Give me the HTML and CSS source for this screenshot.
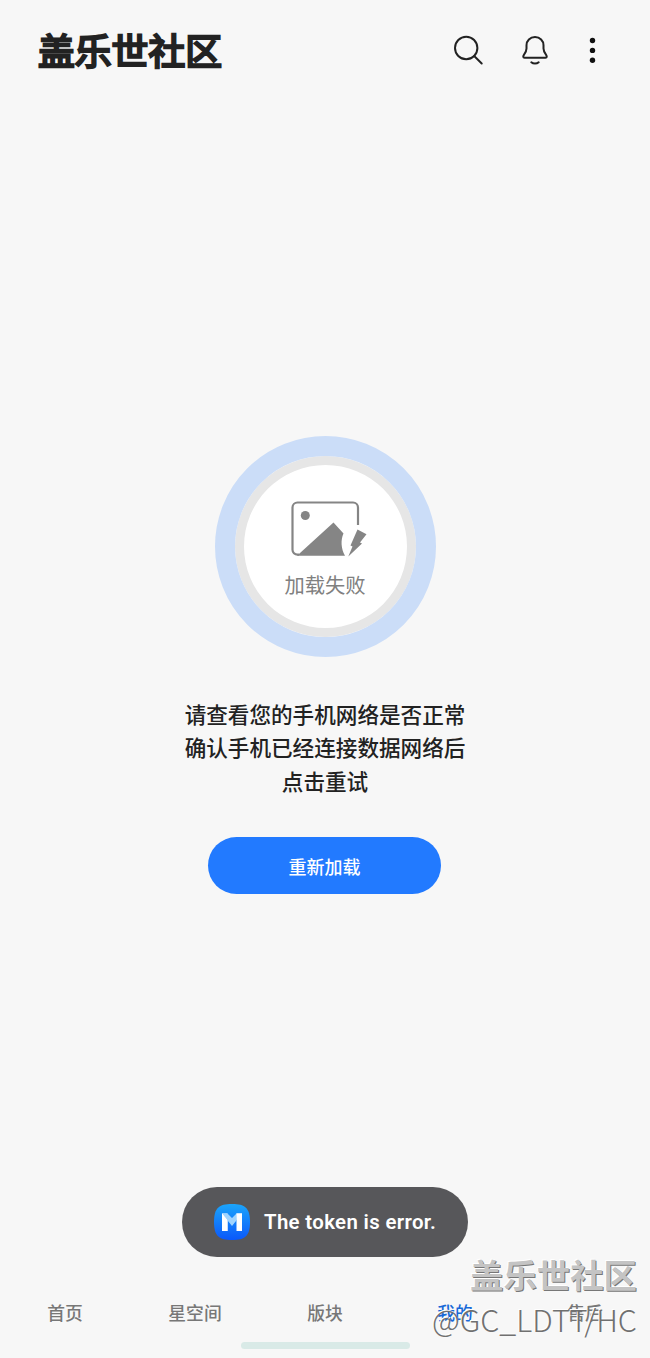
FILE: index.html
```html
<!DOCTYPE html>
<html lang="zh-CN">
<head>
<meta charset="UTF-8">
<meta name="viewport" content="width=device-width, initial-scale=1.0">
<title>盖乐世社区</title>
<link rel="stylesheet" href="styles.css">
</head>
<body>
<div class="page">
  <header class="header-bar">
    <h1 class="logo">盖乐世社区</h1>
    <div class="header-icons">
      <svg class="icon-search" width="32" height="32" viewBox="0 0 32 32">
        <circle cx="14.200" cy="14" r="11.200"/>
        <path d="M22.200 22l7.500 7.500"/>
      </svg>
      <svg class="icon-bell" width="28" height="32" viewBox="0 0 28 32">
        <path d="M14 3C9 3 5.500 6.800 5.500 11.200v3.300c0 2.300-.8 4-2.600 6.300-1 1.400-.9 3 .6 3h21c1.500 0 1.600-1.600.6-3-1.800-2.300-2.600-4-2.600-6.300v-3.300C22.500 6.800 19 3 14 3z"/>
        <path d="M10.300 28.300c2 1.700 5.400 1.700 7.400 0"/>
      </svg>
      <svg class="icon-more" width="8" height="32" viewBox="0 0 8 32">
        <circle cx="3.500" cy="6.500" r="2.700"/>
        <circle cx="3.500" cy="16.400" r="2.700"/>
        <circle cx="3.500" cy="26.300" r="2.700"/>
      </svg>
    </div>
  </header>

  <main class="content">
    <div class="fail-circle">
      <svg width="78" height="56" viewBox="0 0 78 56">
        <path class="frame" d="M8 53.700H6.500A5 5 0 0 1 1.500 48.700V6.500A5 5 0 0 1 6.500 1.500H62A5 5 0 0 1 67 6.500V24"/>
        <circle cx="14.300" cy="14.500" r="4.500"/>
        <path d="M6 54.800L42.500 21.500L52.500 32.500C49.500 39 50 47.500 54 54.800z"/>
        <path d="M66.500 28.500L75.500 33.200L69 41.500L71 42.500L57.300 55.500L61.500 45.500L59.500 44.500z"/>
      </svg>
      <span>加载失败</span>
    </div>
    <p class="tips">请查看您的手机网络是否正常<br>确认手机已经连接数据网络后<br>点击重试</p>
    <button class="reload">重新加载</button>
  </main>

  <div class="toast">
    <svg width="36" height="38" viewBox="0 0 36 38">
      <defs>
        <linearGradient id="appBg" x1="0" y1="0" x2="0" y2="1">
          <stop offset="0" stop-color="#1ba5fb"/>
          <stop offset="1" stop-color="#0b58fa"/>
        </linearGradient>
      </defs>
      <path fill="url(#appBg)" d="M18 1C31 1 36 5 36 19S31 37 18 37 0 33 0 19 5 1 18 1z"/>
      <path fill="#fff" d="M8 10.500h5.500V28H8zM22.500 10.500H28V28h-5.500z"/>
      <path fill="#9fd4ff" d="M8 10.500h5.500l4.500 4.500 4.500-4.500H28l-10 12.500z"/>
      <path fill="#fff" d="M8 10.500V28h5.500V17.500zM22.500 10.500H28V17h-5.200z"/>
    </svg>
    <span>The token is error.</span>
  </div>

  <nav class="tab-bar">
    <a class="tab">首页</a>
    <a class="tab">星空间</a>
    <a class="tab">版块</a>
    <a class="tab active">我的</a>
    <a class="tab">售后</a>
  </nav>
  <div class="home-line"></div>

  <div class="watermark">
    <div class="mark-name">盖乐世社区</div>
    <div class="mark-user">@GC_LDTT/HC</div>
  </div>
</div>
</body>
</html>
```
FILE: styles.css
```css
body {
  margin: 0;
  background-color: #f7f7f7;
  font-family: Roboto, "Noto Sans CJK SC", sans-serif;
}

.page {
  position: relative;
  display: flex;
  flex-direction: column;
  width: 650px;
  height: 1358px;
  overflow: hidden;
}

/* 顶部 */
.header-bar {
  display: flex;
  justify-content: space-between;
  align-items: center;
  height: 100px;
  padding: 0 53px 0 38px;
}

.logo {
  margin: 0;
  padding-top: 5px;
  color: #222;
  font-size: 36.8px;
  font-weight: 400;
  line-height: 54px;
  -webkit-text-stroke: 2.4px #222;
}

.header-icons {
  display: flex;
  align-items: center;
}

.icon-search, .icon-bell {
  fill: none;
  stroke: #222;
  stroke-width: 2;
  stroke-linecap: round;
}

.icon-bell {
  margin-left: 37px;
}

.icon-more {
  margin-left: 40px;
  fill: #111;
}

/* 加载失败 */
.content {
  flex: 1;
  display: flex;
  flex-direction: column;
  align-items: center;
  padding-top: 336px;
}

.fail-circle {
  box-sizing: border-box;
  display: flex;
  flex-direction: column;
  align-items: center;
  width: 221px;
  height: 221px;
  padding-top: 37px;
  border: 20px solid #cbddf8;
  border-radius: 50%;
  background-color: #fff;
  box-shadow: inset 0 0 0 9px #e6e6e6;
  background-clip: padding-box;
}

.fail-circle svg {
  margin: 8px 0 0 9px;
  fill: #858585;
}

.fail-circle .frame {
  fill: none;
  stroke: #858585;
  stroke-width: 2.2;
}

.fail-circle span {
  margin-top: 14px;
  color: #808080;
  font-size: 20.3px;
  line-height: 30px;
}

.tips {
  margin: 42px 0 0;
  color: #222;
  font-size: 21.6px;
  font-weight: 500;
  line-height: 33.4px;
  text-align: center;
}

.reload {
  width: 233px;
  height: 57px;
  margin: 38px 1px 0 0;
  padding: 1px 0 0;
  border: none;
  border-radius: 29px;
  background-color: #227aff;
  color: #fff;
  font-family: inherit;
  font-size: 18px;
  font-weight: 500;
}

.toast {
  box-sizing: border-box;
  display: flex;
  align-items: center;
  align-self: center;
  width: 286px;
  height: 70px;
  padding-left: 32px;
  border-radius: 35px;
  background-color: #57575a;
  color: #fff;
  font-size: 20.4px;
  font-weight: 600;
  letter-spacing: 0.35px;
  white-space: nowrap;
}

.toast span {
  margin-left: 14px;
}

/* 底部导航 */
.tab-bar {
  display: flex;
  height: 56px;
  margin-top: 29px;
}

.tab {
  flex: 1;
  color: #777;
  font-size: 17.8px;
  font-weight: 500;
  line-height: 56px;
  text-align: center;
}

.tab.active {
  color: #1769d8;
}

.home-line {
  align-self: center;
  width: 169px;
  height: 7px;
  margin-bottom: 9px;
  border-radius: 4px;
  background-color: #d9eae7;
}

/* 水印 */
.watermark {
  position: absolute;
  right: 13px;
  bottom: 17px;
  text-align: right;
  white-space: nowrap;
}

.mark-name {
  margin-bottom: -2px;
  color: #c4c4c4;
  font-size: 33.4px;
  font-weight: 700;
  line-height: 44px;
  text-shadow: 1px 1px 0 #777, -1px -1px 0 #fff;
}

.mark-user {
  color: #707070;
  font-family: "Noto Sans CJK SC", sans-serif;
  font-size: 30.5px;
  font-weight: 300;
  line-height: 44px;
  text-shadow: -1px -1px 0 #fff;
}
```
